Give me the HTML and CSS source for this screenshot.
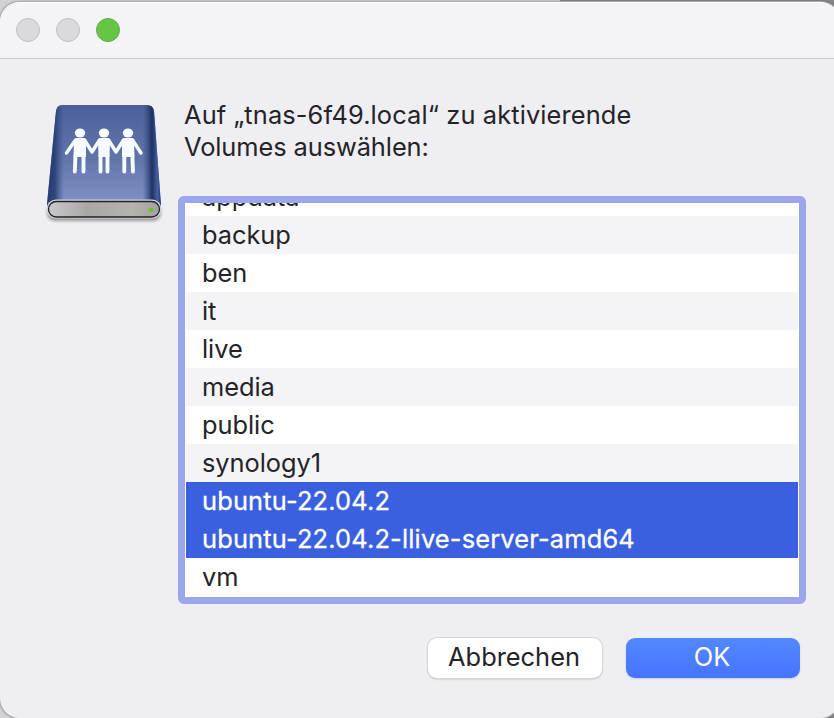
FILE: index.html
```html
<!DOCTYPE html>
<html lang="de">
<head>
<meta charset="utf-8">
<title>Volumes auswählen</title>
<link rel="stylesheet" href="styles.css">
</head>
<body>
<main class="window">
  <header class="titlebar">
    <span class="light"></span>
    <span class="light"></span>
    <span class="light light-zoom"></span>
  </header>
  <div class="content">
    <svg class="drive" width="124" height="126" viewBox="0 0 124 126" aria-hidden="true">
      <defs>
        <linearGradient id="body" x1="0" y1="0" x2="0" y2="1">
          <stop offset="0" stop-color="#4c6198"/>
          <stop offset=".5" stop-color="#6275ab"/>
          <stop offset="1" stop-color="#8797cb"/>
        </linearGradient>
        <linearGradient id="sides" x1="0" y1="0" x2="1" y2="0">
          <stop offset="0" stop-color="#263a73"/>
          <stop offset=".07" stop-color="#243970" stop-opacity=".85"/>
          <stop offset=".15" stop-color="#334a86" stop-opacity="0"/>
          <stop offset=".84" stop-color="#334a86" stop-opacity="0"/>
          <stop offset=".92" stop-color="#1b2d62" stop-opacity=".95"/>
          <stop offset=".97" stop-color="#4760a0"/>
          <stop offset="1" stop-color="#22366c"/>
        </linearGradient>
        <linearGradient id="metal" x1="0" y1="0" x2="1" y2="0">
          <stop offset="0" stop-color="#c9c9cb"/>
          <stop offset=".35" stop-color="#aaa7a6"/>
          <stop offset=".75" stop-color="#b6b2ae"/>
          <stop offset="1" stop-color="#a3a1a1"/>
        </linearGradient>
        <filter id="shadow" x="-10%" y="-50%" width="120%" height="200%"><feGaussianBlur stdDeviation="1.5"/></filter>
      </defs>
      <rect x="7" y="104" width="114" height="17" rx="8" fill="#777" opacity=".7" filter="url(#shadow)"/>
      <path d="M22 5H107Q113 5 114 11L121 105Q121 114 111 114H15Q6 114 7 104L16 11Q17 5 22 5Z" fill="url(#body)"/>
      <path d="M22 5H107Q113 5 114 11L121 105Q121 114 111 114H15Q6 114 7 104L16 11Q17 5 22 5Z" fill="url(#sides)"/>
      <rect x="6.500" y="99.500" width="115" height="19" rx="9.500" fill="#d5d6da"/>
      <rect x="8.500" y="101.500" width="111" height="15.500" rx="7.700" fill="url(#metal)" stroke="#1e2328" stroke-width="1.300"/>
      <rect x="108.500" y="108" width="5" height="4" rx="1.500" fill="#67c927"/>
      <g transform="translate(-2 0)">
        <g fill="#f5fbff">
          <ellipse cx="42" cy="33" rx="5.200" ry="4.500"/>
          <ellipse cx="66" cy="33" rx="5.200" ry="4.500"/>
          <ellipse cx="90" cy="33" rx="5.200" ry="4.500"/>
          <path d="M38 38H46Q47.500 38 48 40L48 57H35.500L36 40Z"/>
          <path d="M62 38H70Q71.500 38 72 40L71.500 57H60.500L60 40Z"/>
          <path d="M86 38H94Q95.500 38 96 40L96.500 57H84L84 40Z"/>
        </g>
        <g fill="none" stroke="#f5fbff" stroke-width="3.400" stroke-linecap="round" stroke-linejoin="round">
          <path d="M37.500 40L28.500 53M46.500 40L54 52L61.500 40M70.500 40L78 52L85.500 40M94.500 40L103 53"/>
          <path stroke-width="3.900" d="M37.500 55L36.800 71.500M45.500 55V71.500M62.500 55V71.500M69.500 55V71.500M86.300 55V71.500M94.300 55L95 71.500"/>
        </g>
      </g>
    </svg>
    <section class="panel">
      <h1 class="message"><span class="line1">Auf „tnas-6f49.local“ zu aktivierende</span><br><span class="line2">Volumes auswählen:</span></h1>
      <ul class="volumes">
        <li>appdata</li>
        <li>backup</li>
        <li>ben</li>
        <li>it</li>
        <li>live</li>
        <li>media</li>
        <li>public</li>
        <li>synology1</li>
        <li class="selected">ubuntu-22.04.2</li>
        <li class="selected">ubuntu-22.04.2-llive-server-amd64</li>
        <li>vm</li>
      </ul>
      <div class="actions">
        <button class="button">Abbrechen</button>
        <button class="button button-primary">OK</button>
      </div>
    </section>
  </div>
</main>
</body>
</html>
```
FILE: styles.css
```css
* { box-sizing: border-box; }

body {
  margin: 0;
  height: 718px;
  padding-top: 2px;
  overflow: hidden;
  background: linear-gradient(90deg, #d2d1d4 0 560px, #858486 560px);
  color: #242428;
  font: 400 25.4px/32px Inter, "Liberation Sans", sans-serif;
}

.window {
  width: 840px;
  height: 716px;
  border-radius: 20px;
  overflow: hidden;
  background: #efeef3;
  box-shadow: 0 0 0 1px #aaa9ac, 0 0 3px #0008;
}

.titlebar {
  display: flex;
  align-items: center;
  gap: 16px;
  height: 57px;
  padding: 0 16px 1px;
  border-bottom: 1px solid #cbcacd;
  background: #f4f3f6;
  box-shadow: inset 0 1px #fff;
}

.light {
  width: 24px;
  height: 24px;
  border: 1px solid #bfbec0;
  border-radius: 50%;
  background: #dad9dc;
}

.light-zoom { border-color: #60ad48; background: #65c644; }

.content { display: flex; padding: 40px 0 0 40px; }

.drive { flex: none; margin: 1px 14px 0 0; }

.panel { width: 628px; }

.message {
  margin: 0 0 33px;
  padding-left: 6px;
  font: inherit;
  white-space: nowrap;
}

.line1 { letter-spacing: 0.12px; }
.line2 { letter-spacing: -0.08px; }

.volumes {
  display: flex;
  flex-direction: column;
  justify-content: flex-end;
  height: 408px;
  margin: 0;
  padding: 0 1px 1px;
  border: 7px solid #9ba7ec;
  border-radius: 6px;
  overflow: hidden;
  background: #fff;
  list-style: none;
}

.volumes li {
  flex: none;
  height: 38px;
  padding-left: 16px;
  line-height: 38px;
  letter-spacing: -0.05px;
  white-space: nowrap;
}

.volumes li:nth-child(even) { background: #f4f3f6; }

.volumes .selected,
.volumes .selected:nth-child(even) {
  background: #3b60df;
  color: #fff;
  letter-spacing: 0.17px;
  -webkit-text-stroke: 0.3px #fff;
}

.actions {
  display: flex;
  justify-content: flex-end;
  gap: 24px;
  padding: 34px 6px 0 0;
}

.button {
  width: 174px;
  height: 40px;
  padding: 0 2px 2px 0;
  border: 0;
  border-radius: 9px;
  background: #fff;
  box-shadow: 0 0 0 1px #d5d4d8, 0 1px 2px #0005;
  color: inherit;
  font: inherit;
  letter-spacing: 0;
}

.button-primary {
  background: linear-gradient(#5388ff, #4674ff);
  box-shadow: 0 1px 2px #7790e155;
  color: #fff;
}
```
